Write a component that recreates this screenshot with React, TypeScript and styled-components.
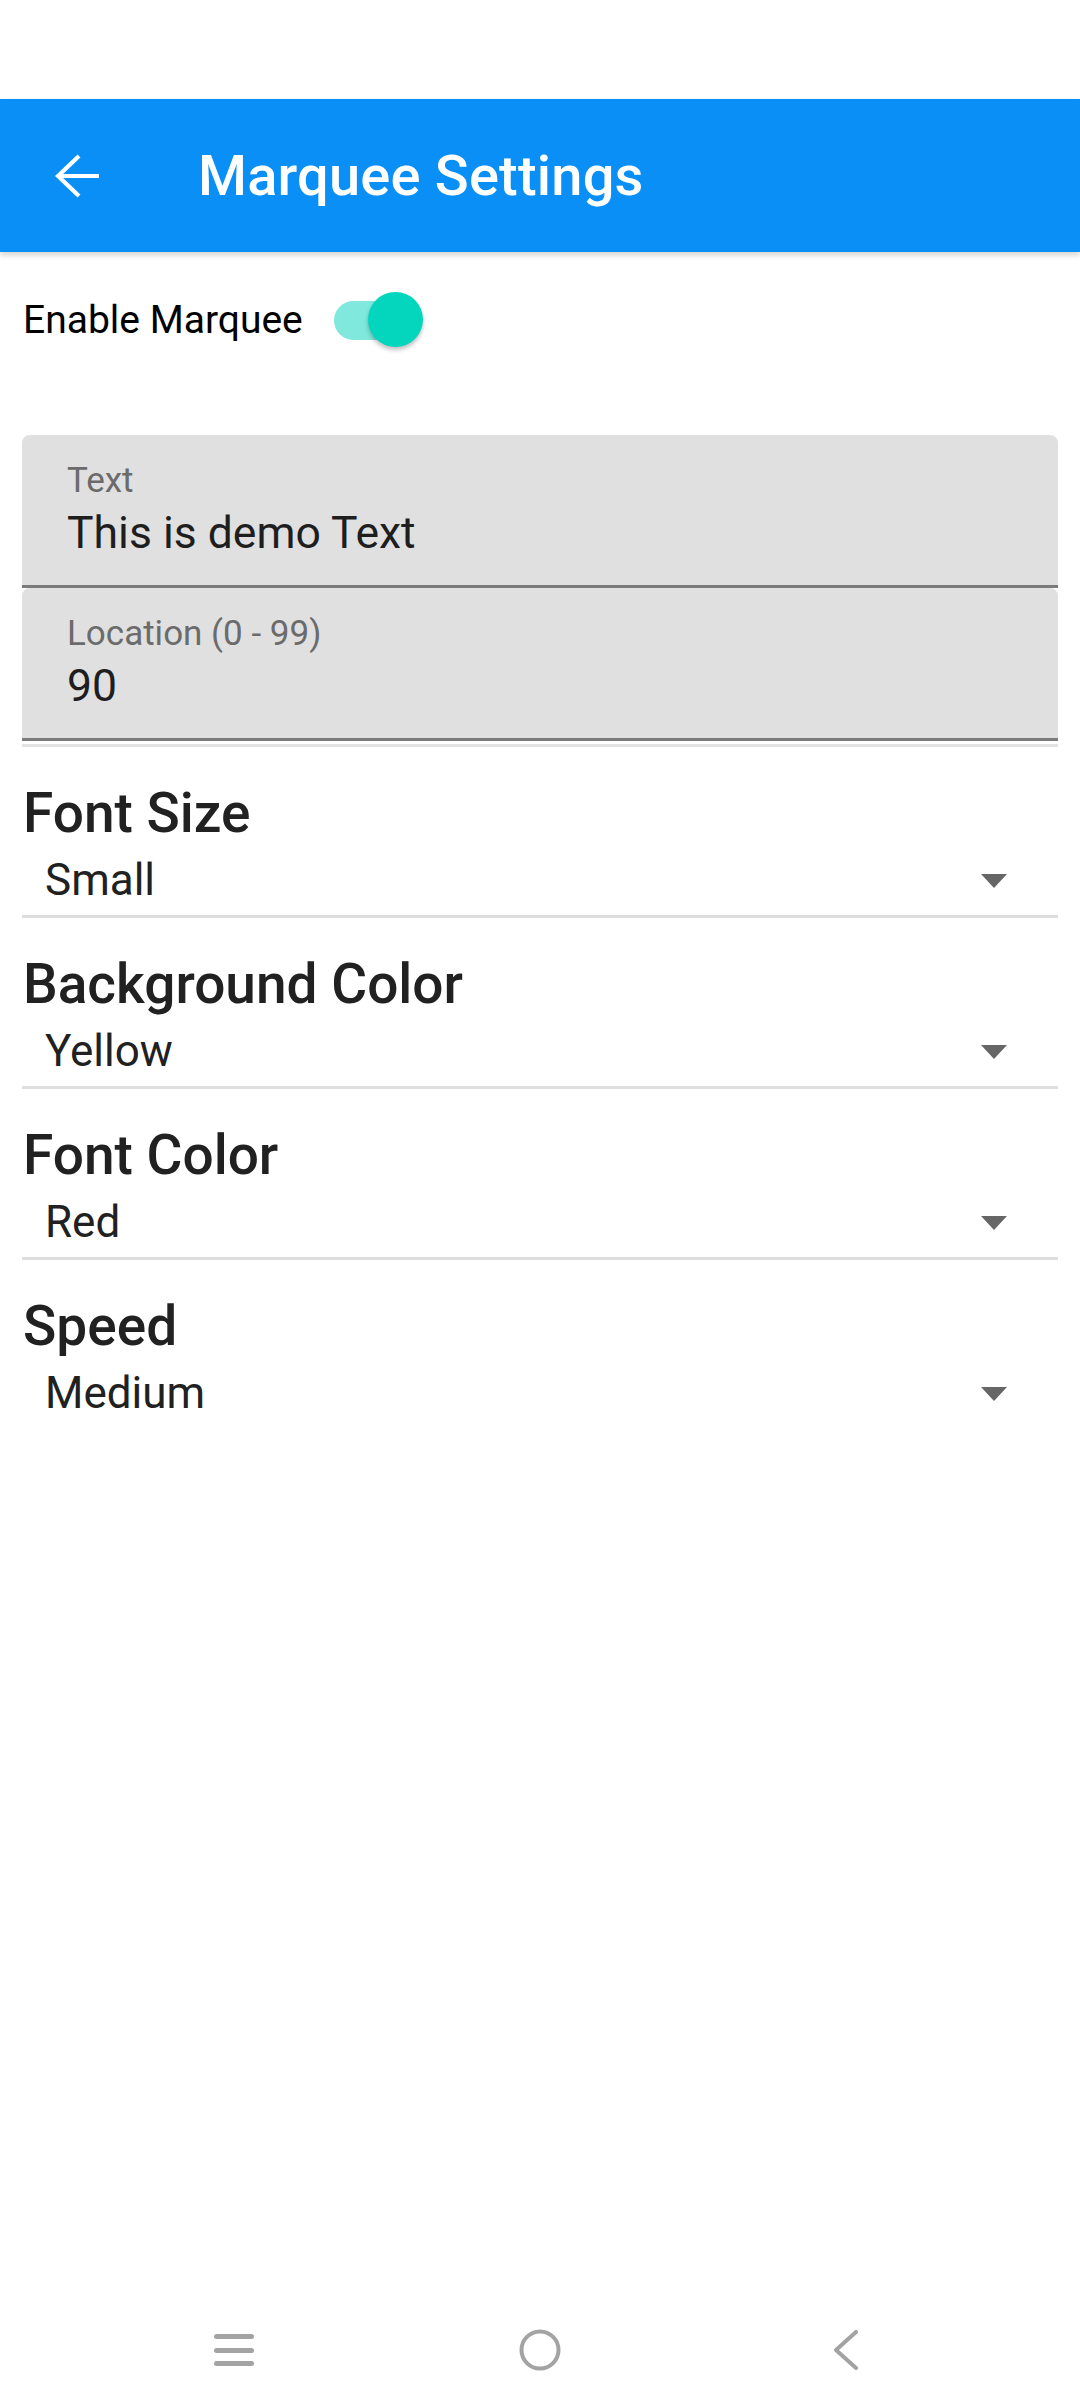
import React from 'react'
import styled, { createGlobalStyle } from 'styled-components'

const GlobalStyle = createGlobalStyle`
  html, body {
    margin: 0;
    padding: 0;
    background: #ffffff;
    font-family: Roboto, "Noto Sans", "Liberation Sans", sans-serif;
  }
  * {
    box-sizing: border-box;
  }
`

const Screen = styled.div`
  width: 1080px;
  min-height: 2408px;
  display: flex;
  flex-direction: column;
  background: #ffffff;
`

const StatusBar = styled.div`
  height: 99px;
  background: #ffffff;
`

const AppBar = styled.header`
  height: 153px;
  display: flex;
  align-items: center;
  background: #0a8ff7;
  box-shadow: 0 3px 6px rgba(0, 0, 0, 0.18);
  position: relative;
  z-index: 1;
`

const BackButton = styled.button`
  width: 44px;
  height: 44px;
  margin-left: 55px;
  padding: 0;
  border: none;
  background: transparent;
  display: flex;
`

const Title = styled.h1`
  margin: 0 0 0 99px;
  font-size: 56px;
  font-weight: 500;
  color: #ffffff;
  letter-spacing: 0.2px;
`

const Content = styled.main`
  flex: 1;
  padding: 40px 22px 0 22px;
  display: flex;
  flex-direction: column;
`

const ToggleRow = styled.div`
  height: 56px;
  display: flex;
  align-items: center;
  padding-left: 1px;
`

const ToggleLabel = styled.span`
  font-size: 39px;
  line-height: 44px;
  color: #000000;
  margin-right: 31px;
`

const Switch = styled.div`
  position: relative;
  width: 89px;
  height: 56px;
  display: flex;
  align-items: center;
`

const Track = styled.div<{ $on: boolean }>`
  width: 80px;
  height: 39px;
  border-radius: 20px;
  background: ${(p) => (p.$on ? '#80e8dc' : '#bdbdbd')};
`

const Thumb = styled.div<{ $on: boolean }>`
  position: absolute;
  top: 0;
  left: ${(p) => (p.$on ? '34px' : '0')};
  width: 55px;
  height: 55px;
  border-radius: 50%;
  background: ${(p) => (p.$on ? '#03d6bc' : '#fafafa')};
  box-shadow: 0 3px 4px rgba(0, 0, 0, 0.25);
`

const Fields = styled.div`
  margin-top: 87px;
  display: flex;
  flex-direction: column;
`

const Field = styled.div`
  height: 153px;
  padding: 26px 45px 0 45px;
  background: #e0e0e0;
  border-radius: 8px 8px 0 0;
  border-bottom: 3px solid #7b7b7b;
`

const FieldLabel = styled.div`
  font-size: 35px;
  line-height: 40px;
  color: #6b6b6b;
`

const FieldValue = styled.div`
  margin-top: 6px;
  font-size: 44.5px;
  line-height: 52px;
  color: #1e1e1e;
`

const Rule = styled.div`
  height: 3px;
  margin-top: 3px;
  background: #e2e2e2;
`

const Section = styled.section`
  margin-top: 34px;
  display: flex;
  flex-direction: column;
`

const SectionTitle = styled.h2`
  margin: 0;
  padding-left: 1px;
  font-size: 55px;
  line-height: 64px;
  font-weight: 500;
  color: #212121;
`

const Select = styled.div<{ $last?: boolean }>`
  display: flex;
  align-items: center;
  justify-content: space-between;
  padding: 7px 51px 7px 23px;
  border-bottom: 3px solid ${(p) => (p.$last ? 'transparent' : '#dedede')};
`

const SelectValue = styled.span`
  font-size: 44px;
  line-height: 56px;
  color: #212121;
`

const Caret = styled.span`
  width: 0;
  height: 0;
  border-left: 13.5px solid transparent;
  border-right: 13.5px solid transparent;
  border-top: 14px solid #666666;
  margin-top: 2px;
`

const NavBar = styled.nav`
  height: 116px;
  display: flex;
  justify-content: center;
  align-items: center;
`

const NavSlot = styled.div`
  width: 306px;
  display: flex;
  justify-content: center;
  align-items: center;
`

const sections = [
  { title: 'Font Size', value: 'Small' },
  { title: 'Background Color', value: 'Yellow' },
  { title: 'Font Color', value: 'Red' },
  { title: 'Speed', value: 'Medium', last: true },
]

function ArrowBack(): React.ReactElement {
  return (
    <svg width="44" height="44" viewBox="0 0 44 44" fill="none">
      <path d="M3 22 H44 M24 2 L3 22 L24 42" stroke="#ffffff" strokeWidth="4.2" strokeLinejoin="miter" />
    </svg>
  )
}

export default function App(): React.ReactElement {
  return (
    <>
      <GlobalStyle />
      <Screen>
        <StatusBar />
        <AppBar>
          <BackButton aria-label="Back">
            <ArrowBack />
          </BackButton>
          <Title>Marquee Settings</Title>
        </AppBar>
        <Content>
          <ToggleRow>
            <ToggleLabel>Enable Marquee</ToggleLabel>
            <Switch>
              <Track $on />
              <Thumb $on />
            </Switch>
          </ToggleRow>

          <Fields>
            <Field>
              <FieldLabel>Text</FieldLabel>
              <FieldValue>This is demo Text</FieldValue>
            </Field>
            <Field>
              <FieldLabel>Location (0 - 99)</FieldLabel>
              <FieldValue>90</FieldValue>
            </Field>
            <Rule />
          </Fields>

          {sections.map((s) => (
            <Section key={s.title}>
              <SectionTitle>{s.title}</SectionTitle>
              <Select $last={s.last}>
                <SelectValue>{s.value}</SelectValue>
                <Caret />
              </Select>
            </Section>
          ))}
        </Content>

        {/* system navigation */}
        <NavBar>
          <NavSlot>
            <svg width="40" height="34" viewBox="0 0 40 34">
              <rect x="0" y="1" width="40" height="5" rx="2.5" fill="#a3a3a3" />
              <rect x="0" y="15" width="40" height="5" rx="2.5" fill="#a3a3a3" />
              <rect x="0" y="28" width="40" height="5" rx="2.5" fill="#a3a3a3" />
            </svg>
          </NavSlot>
          <NavSlot>
            <svg width="42" height="42" viewBox="0 0 42 42">
              <circle cx="21" cy="21" r="18.5" stroke="#a3a3a3" strokeWidth="4" fill="none" />
            </svg>
          </NavSlot>
          <NavSlot>
            <svg width="28" height="40" viewBox="0 0 28 40">
              <path d="M24 2 L4 20 L24 38" stroke="#a3a3a3" strokeWidth="4" fill="none" strokeLinecap="round" strokeLinejoin="round" />
            </svg>
          </NavSlot>
        </NavBar>
      </Screen>
    </>
  )
}
